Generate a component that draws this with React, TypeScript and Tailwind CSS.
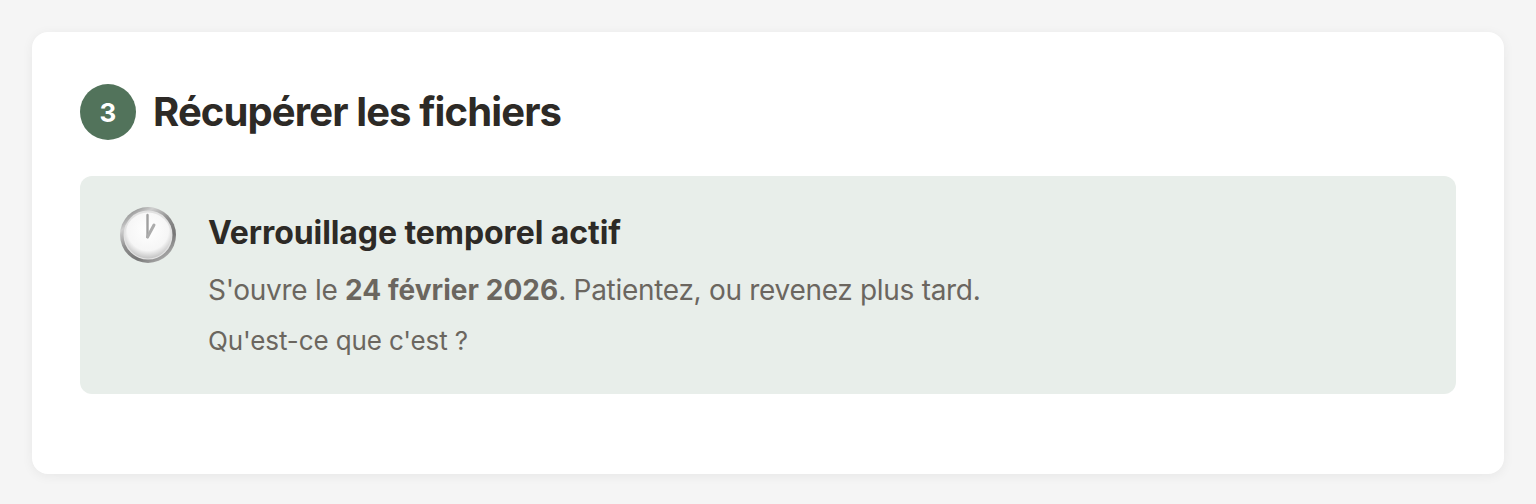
import React from 'react';

const ClockEmoji: React.FC = () => (
  <svg width="56" height="56" viewBox="0 0 56 56" className="block">
    <defs>
      <linearGradient id="rim" x1="0.15" y1="0" x2="0.85" y2="1">
        <stop offset="0" stopColor="#777878" />
        <stop offset="0.22" stopColor="#cfcfcf" />
        <stop offset="0.45" stopColor="#8f8f8f" />
        <stop offset="0.7" stopColor="#767676" />
        <stop offset="0.9" stopColor="#a4a4a4" />
        <stop offset="1" stopColor="#e2e2e2" />
      </linearGradient>
      <radialGradient id="face" cx="0.5" cy="0.38" r="0.64">
        <stop offset="0" stopColor="#ffffff" />
        <stop offset="0.7" stopColor="#f6f6f6" />
        <stop offset="1" stopColor="#bdbdbd" />
      </radialGradient>
    </defs>
    <circle cx="28" cy="28" r="28" fill="url(#rim)" />
    <circle cx="28" cy="28" r="24.5" fill="#e2e2e2" />
    <circle cx="28" cy="28.5" r="23" fill="url(#face)" />
    <path d="M27.5 8 L27.5 30" stroke="#a0a0a0" strokeWidth="2.4" strokeLinecap="round" />
    <path d="M27.5 30 L34 18" stroke="#acacac" strokeWidth="3" strokeLinecap="round" />
  </svg>
);

const App: React.FC = () => {
  return (
    <div className="min-h-[504px] bg-[#f5f5f5] p-8 font-['Inter',sans-serif] antialiased">
      <div className="h-[442px] rounded-2xl bg-white p-12 shadow-[0_2px_12px_rgba(0,0,0,0.06)]">
        <div className="mb-9 mt-1 flex items-center gap-[17px]">
          <div className="flex h-14 w-14 shrink-0 items-center justify-center rounded-full bg-[#52735b] text-[26px] font-bold text-white">
            3
          </div>
          <h2 className="text-[40px] leading-[56px] font-bold tracking-[-0.88px] text-[#2d2a26]">
            Récupérer les fichiers
          </h2>
        </div>
        <div className="flex h-[218px] gap-8 rounded-xl bg-[#e8eeea] px-10 pt-8">
          <div className="-mt-[1px] shrink-0">
            <ClockEmoji />
          </div>
          <div className="pt-px">
            <h3 className="text-[32px] leading-[48px] font-bold tracking-[-0.08px] text-[#2d2a26]">Verrouillage temporel actif</h3>
            <p className="mt-[11px] text-[28px] leading-[44px] tracking-[-0.3px] text-[#6b665f]">
              S'ouvre le <strong className="font-bold tracking-[0.05px]">24 février 2026</strong>. Patientez, ou revenez plus tard.
            </p>
            <p className="mt-2 text-[26px] leading-[42px] tracking-[-0.12px] text-[#6b665f]">Qu'est-ce que c'est ?</p>
          </div>
        </div>
      </div>
    </div>
  );
};

export default App;
